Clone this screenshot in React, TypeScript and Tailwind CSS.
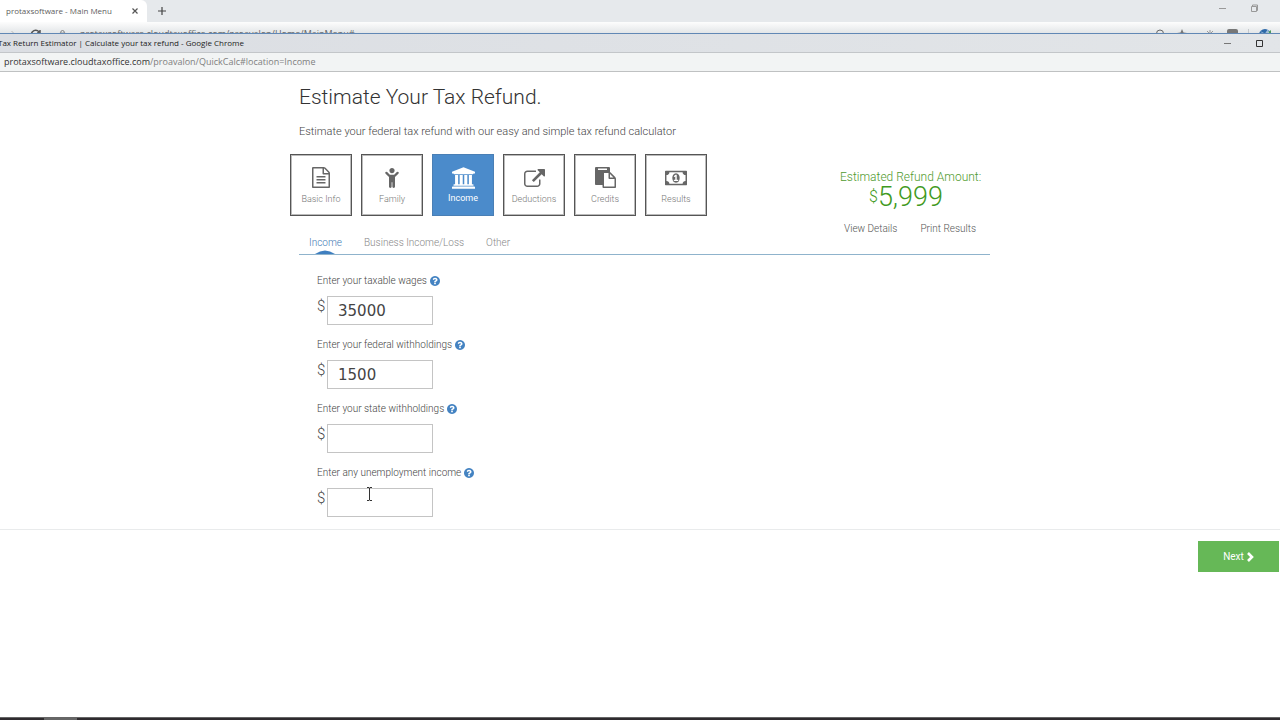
import type { ReactNode } from "react";

type IconProps = { className?: string };

function Glyph({ box, d, className }: { box: string; d: string; className?: string }) {
  return (
    <svg viewBox={box} className={className} fill="currentColor" aria-hidden="true">
      <path d={d} />
    </svg>
  );
}

const FILE =
  "M1596 380q28 28 48 76t20 88v1152q0 40-28 68t-68 28h-1344q-40 0-68-28t-28-68v-1600q0-40 28-68t68-28h896q40 0 88 20t76 48zm-444-244v376h376q-10-29-22-41l-313-313q-12-12-41-22zm384 1528v-1024h-416q-40 0-68-28t-28-68v-416h-768v1536h1280zm-1024-864q0-14 9-23t23-9h704q14 0 23 9t9 23v64q0 14-9 23t-23 9h-704q-14 0-23-9t-9-23v-64zm736 224q14 0 23 9t9 23v64q0 14-9 23t-23 9h-704q-14 0-23-9t-9-23v-64q0-14 9-23t23-9h704zm0 256q14 0 23 9t9 23v64q0 14-9 23t-23 9h-704q-14 0-23-9t-9-23v-64q0-14 9-23t23-9h704z";
const CHILD =
  "M1132 612l-292 292v824q0 46-33 79t-79 33-79-33-33-79v-384h-64v384q0 46-33 79t-79 33-79-33-33-79v-824l-292-292q-28-28-28-68t28-68 68-28 68 28l228 228h368l228-228q28-28 68-28t68 28 28 68-28 68zM808 352q0 93-65.500 158.500t-158.500 65.500-158.500-65.500-65.500-158.500 65.500-158.500 158.500-65.500 158.500 65.500 65.500 158.500z";
const BANK =
  "M960 0l960 384v128h-128q0 26-20.500 45t-48.500 19h-1526q-28 0-48.500-19t-20.500-45h-128v-128zm-704 640h256v768h128v-768h256v768h128v-768h256v768h128v-768h256v768h59q28 0 48.500 19t20.500 45v64h-1664v-64q0-26 20.500-45t48.500-19h59v-768zm1595 960q28 0 48.500 19t20.500 45v128h-1920v-128q0-26 20.500-45t48.500-19h1782z";
const EXTERNAL =
  "M1408 992v320q0 119-84.500 203.500t-203.500 84.500h-832q-119 0-203.500-84.500t-84.500-203.500v-832q0-119 84.500-203.500t203.500-84.500h704q14 0 23 9t9 23v64q0 14-9 23t-23 9h-704q-66 0-113 47t-47 113v832q0 66 47 113t113 47h832q66 0 113-47t47-113v-320q0-14 9-23t23-9h64q14 0 23 9t9 23zm384-864v512q0 26-19 45t-45 19-45-19l-176-176-652 652q-10 10-23 10t-23-10l-114-114q-10-10-10-23t10-23l652-652-176-176q-19-19-19-45t19-45 45-19h512q26 0 45 19t19 45z";
const PASTE =
  "M768 1664h896v-640h-416q-40 0-68-28t-28-68v-416h-384v1152zm256-1440v-64q0-13-9.500-22.500t-22.500-9.500h-704q-13 0-22.500 9.500t-9.500 22.500v64q0 13 9.500 22.500t22.500 9.500h704q13 0 22.500-9.500t9.500-22.500zm256 672h299l-299-299v299zm512 128v672q0 40-28 68t-68 28h-960q-40 0-68-28t-28-68v-160h-544q-40 0-68-28t-28-68v-1344q0-40 28-68t68-28h1088q40 0 68 28t28 68v328q21 13 36 28l408 408q28 28 48 76t20 88z";
const MONEY =
  "M768 1152h384v-96h-128v-448h-114l-148 137 77 80q42-37 55-57h2v288h-128v96zm512-256q0 70-21 142t-59.500 134-101.500 101-138 39-138-39-101.500-101-59.500-134-21-142 21-142 59.500-134 101.500-101 138-39 138 39 101.500 101 59.500 134 21 142zm512 256v-512q-106 0-181-75t-75-181h-1152q0 106-75 181t-181 75v512q106 0 181 75t75 181h1152q0-106 75-181t181-75zm128-832v1152q0 26-19 45t-45 19h-1792q-26 0-45-19t-19-45v-1152q0-26 19-45t45-19h1792q26 0 45 19t19 45z";
const HELP =
  "M1024 1376v-192q0-14-9-23t-23-9h-192q-14 0-23 9t-9 23v192q0 14 9 23t23 9h192q14 0 23-9t9-23zm256-672q0-88-55.500-163t-138.500-116-170-41q-243 0-371 213-15 24 8 42l132 100q7 6 19 6 16 0 25-12 53-68 86-92 34-24 86-24 48 0 85.500 26t37.500 59q0 38-20 61t-68 45q-63 28-115.500 86.500t-52.500 125.500v36q0 14 9 23t23 9h192q14 0 23-9t9-23q0-19 21.500-49.500t54.500-49.500q32-18 49-28.500t46-35 44.500-48 28-60.500 12.500-81zm384 192q0 209-103 385.500t-279.500 279.500-385.500 103-385.500-103-279.500-279.500-103-385.500 103-385.500 279.500-279.500 385.500-103 385.500 103 279.500 279.500 103 385.500z";

const steps: { label: string; active?: boolean; icon: ReactNode }[] = [
  { label: "Basic Info", icon: <Glyph box="128 0 1536 1792" d={FILE} className="h-[21px] w-[18px]" /> },
  { label: "Family", icon: <Glyph box="0 128 1168 1712" d={CHILD} className="h-[20px] w-[14px]" /> },
  { label: "Income", active: true, icon: <Glyph box="0 0 1920 1792" d={BANK} className="h-[22px] w-[23px]" /> },
  { label: "Deductions", icon: <Glyph box="0 0 1792 1664" d={EXTERNAL} className="h-[20px] w-[21px]" /> },
  { label: "Credits", icon: <Glyph box="0 0 1792 1792" d={PASTE} className="h-[21px] w-[21px]" /> },
  { label: "Results", icon: <Glyph box="0 256 1920 1280" d={MONEY} className="h-[16px] w-[22px]" /> },
];

const fields = [
  { id: "wages", label: "Enter your taxable wages", value: "35000" },
  { id: "federal", label: "Enter your federal withholdings", value: "1500" },
  { id: "state", label: "Enter your state withholdings", value: "" },
  { id: "unemployment", label: "Enter any unemployment income", value: "" },
];

function Minimize({ className }: IconProps) {
  return (
    <svg viewBox="0 0 9 9" className={className} aria-hidden="true">
      <path d="M1 4.500h7" stroke="currentColor" />
    </svg>
  );
}

function BackWindow() {
  return (
    <div className="font-['Open_Sans',sans-serif]">
      <div className="flex h-[22px] items-start justify-between bg-[#e6e9ec]">
        <div className="flex h-full items-center">
          <div className="flex h-full w-[147px] items-center justify-between rounded-tr-md bg-white pr-[8px] pl-[6px]">
            <span className="text-[8px] leading-[20px] text-[#606060]">protaxsoftware - Main Menu</span>
            <button aria-label="Close tab" className="text-[#555]">
              <svg viewBox="0 0 8 8" className="size-[8px]" aria-hidden="true">
                <path d="M1.500 1.500l5 5M6.500 1.500l-5 5" stroke="currentColor" strokeWidth="1.200" />
              </svg>
            </button>
          </div>
          <button aria-label="New tab" className="ml-[10px] text-[#444]">
            <svg viewBox="0 0 10 10" className="size-[10px]" aria-hidden="true">
              <path d="M5 1v8M1 5h8" stroke="currentColor" strokeWidth="1.200" />
            </svg>
          </button>
        </div>
        <div className="flex h-[17px] items-center gap-[23px] pr-[21px] text-[#999]">
          <Minimize className="size-[9px]" />
          <svg viewBox="0 0 9 9" className="size-[9px]" fill="none" stroke="currentColor" aria-hidden="true">
            <path d="M1.500 2.500h5v5h-5zM2.500 2V1h5v5.500H7" />
          </svg>
        </div>
      </div>
      <div className="flex h-[11px] items-start justify-between overflow-hidden bg-linear-to-b from-[#fdfdfd] to-[#e3e6e8] pr-[9px] pl-[10px] text-[#666]">
        <div className="flex items-start gap-[14px] pt-[7px]">
          <svg viewBox="0 0 8 10" className="h-[10px] w-[6px]" fill="none" stroke="#aaa" aria-hidden="true">
            <path d="M2 1l4 4-4 4" />
          </svg>
          <svg viewBox="0 0 11 11" className="size-[11px]" fill="none" stroke="#555" strokeWidth="1.500" aria-hidden="true">
            <path d="M9.500 7.500A4.300 4.300 0 1 1 9 3M10 1v3H7" />
          </svg>
          <svg viewBox="0 0 8 10" className="ml-[4px] h-[10px] w-[7px]" fill="none" stroke="#777" aria-hidden="true">
            <path d="M2 4V3a2 2 0 0 1 4 0v1M1 4h6v5H1z" />
          </svg>
          <span className="text-[9px] leading-[10px] whitespace-nowrap">
            protaxsoftware.cloudtaxoffice.com/proavalon/Home/MainMenu#
          </span>
        </div>
        <div className="flex items-start gap-[12px] pt-[7px]">
          <svg viewBox="0 0 10 10" className="size-[10px]" fill="none" stroke="#666" aria-hidden="true">
            <circle cx="5" cy="4.500" r="3.500" />
          </svg>
          <svg viewBox="0 0 10 10" className="size-[10px]" fill="#777" aria-hidden="true">
            <path d="M5 0l1.500 3.500L10 4 7 6l1 4-3-2-3 2 1-4-3-2 3.500-.5z" />
          </svg>
          <svg viewBox="0 0 10 10" className="ml-[6px] size-[10px]" stroke="#999" aria-hidden="true">
            <path d="M5 1v8M1 5h8M2 2l6 6M8 2L2 8" />
          </svg>
          <span className="h-[10px] w-[11px] rounded-xs bg-[#777]" />
          <span className="ml-[-2px] h-[10px] w-px bg-[#c4c8cc]" />
          <svg viewBox="0 0 12 12" className="ml-[-2px] size-[12px]" aria-hidden="true">
            <circle cx="6" cy="6" r="6" fill="#2d69a8" />
            <path d="M7 5l5-4v6l-4 3z" fill="#4b9b5d" />
            <path d="M1 2l10 5-2-7-4 6z" fill="#e8f1f8" opacity=".6" />
          </svg>
        </div>
      </div>
    </div>
  );
}

function PopupBars() {
  return (
    <div className="border-t border-[#6188b5] font-['Open_Sans',sans-serif]">
      <div className="flex h-[19px] items-center justify-between overflow-hidden border-b border-[#c3c6c9] bg-linear-to-r from-[#dbdee3] to-[#e2e5e8]">
        <span className="-ml-[2px] text-[8px] leading-[18px] whitespace-nowrap text-[#222]">
          Tax Return Estimator | Calculate your tax refund - Google Chrome
        </span>
        <div className="flex items-center gap-[23px] pr-[16px] text-[#333]">
          <Minimize className="size-[9px] text-[#777]" />
          <svg viewBox="0 0 9 9" className="size-[9px]" fill="none" stroke="currentColor" aria-hidden="true">
            <path d="M1.500 1.500h6v6h-6z" />
          </svg>
        </div>
      </div>
      <div className="h-[19px] border-b border-[#bfc1c2] bg-[#f2f4f4] pl-[4px] text-[9px] leading-[18px] text-[#808080]">
        <span className="text-[#333]">protaxsoftware.cloudtaxoffice.com</span>/proavalon/QuickCalc#location=Income
      </div>
    </div>
  );
}

export default function App() {
  return (
    <div className="flex min-h-screen flex-col bg-white font-['Roboto',sans-serif] font-light text-[#444]">
      <header className="font-normal">
        <BackWindow />
        <PopupBars />
      </header>

      <main>
        <div className="mx-auto max-w-[700px]">
          <div className="pl-[9px]">
            <h1 className="pt-[12px] text-[21px] leading-[26px] text-[#333]">Estimate Your Tax Refund.</h1>
            <p className="pt-[14px] text-[11px] leading-[16px]">
              Estimate your federal tax refund with our easy and simple tax refund calculator
            </p>
          </div>

          <div className="flex items-start justify-between pt-[14px]">
            <nav aria-label="Steps" className="flex gap-[9px]">
              {steps.map((s) => (
                <button
                  key={s.label}
                  className={
                    s.active
                      ? "flex size-[62px] flex-col items-center border border-[#4a7fb5] bg-[#4b8bcb] pt-[11px] font-normal text-white"
                      : "flex size-[62px] flex-col items-center border border-[#555] bg-white pt-[11px] text-[#666] inset-ring inset-ring-[#bbb]"
                  }
                >
                  <span className="flex h-[23px] items-center">{s.icon}</span>
                  <span className={s.active ? "pt-[2px] text-[9px] leading-[14px]" : "pt-[3px] text-[9px] leading-[14px] text-[#777]"}>
                    {s.label}
                  </span>
                </button>
              ))}
            </nav>
            <section className="mt-[16px] mr-[10px] w-[140px] text-center">
              <h2 className="text-[12px] leading-[14px] whitespace-nowrap text-[#4f9a2e]">Estimated Refund Amount:</h2>
              <p className="flex items-start justify-center pr-[8px] text-[27px] leading-[27px] text-[#3f9a22]">
                <span className="text-[16px] leading-[26px]">$</span>5,999
              </p>
              <div className="flex justify-between px-[4px] pt-[11px] text-[10px] leading-[14px] whitespace-nowrap text-[#555]">
                <a href="#details">View Details</a>
                <a href="#print">Print Results</a>
              </div>
            </section>
          </div>

          <div className="ml-[9px] flex gap-[22px] border-b border-[#8fb3cc] pl-[10px] text-[10px] leading-[14px] text-[#888]">
            <a href="#income" className="flex flex-col items-center text-[#3f7ab5]">
              Income
              <svg viewBox="0 0 20 4" className="h-[4px] w-[20px]" fill="#3f7fc0" aria-hidden="true">
                <path d="M0 4Q10-3 20 4z" />
              </svg>
            </a>
            <a href="#business">Business Income/Loss</a>
            <a href="#other">Other</a>
          </div>

          <form className="flex flex-col gap-[13px] pt-[19px] pb-[12px] pl-[27px]">
            {fields.map((f) => (
              <div key={f.id}>
                <div className="flex items-center gap-[3px] text-[10px] leading-[14px]">
                  <label htmlFor={f.id}>{f.label}</label>
                  <Glyph box="128 128 1536 1536" d={HELP} className="size-[10px] text-[#4483c2]" />
                </div>
                <div className="flex items-start gap-[2px] pt-[8px]">
                  <span className="w-[8px] text-[15px] leading-[21px]">$</span>
                  <input
                    id={f.id}
                    defaultValue={f.value}
                    className="h-[29px] w-[106px] border border-[#c4c4c4] px-[10px] font-['DejaVu_Sans',sans-serif] text-[15px] font-normal text-[#444] outline-none"
                  />
                </div>
              </div>
            ))}
          </form>
        </div>

        <div className="flex justify-end border-t border-[#e9ebec] pt-[11px] pr-px">
          <button className="flex h-[31px] w-[81px] items-center justify-center gap-[3px] bg-[#66b857] text-[10px] font-normal text-white">
            Next
            <svg viewBox="0 0 7 10" className="h-[10px] w-[7px]" fill="none" stroke="currentColor" strokeWidth="2.600" aria-hidden="true">
              <path d="M1 1l4 4-4 4" />
            </svg>
          </button>
        </div>
      </main>

      <svg
        viewBox="0 0 7 14"
        className="pointer-events-none absolute top-[487px] left-[366px] h-[14px] w-[7px]"
        fill="none"
        stroke="#333"
        aria-hidden="true"
      >
        <path d="M1 .5h2l.5.5.5-.5h2M1 13.500h2l.5-.5.5.5h2M3.500 1v12" />
      </svg>

      <footer className="mt-auto flex h-[3px] border-t border-[#666] bg-[#2f2b2e] pl-[44px]">
        <span className="w-[33px] bg-[#666]" />
      </footer>
    </div>
  );
}
